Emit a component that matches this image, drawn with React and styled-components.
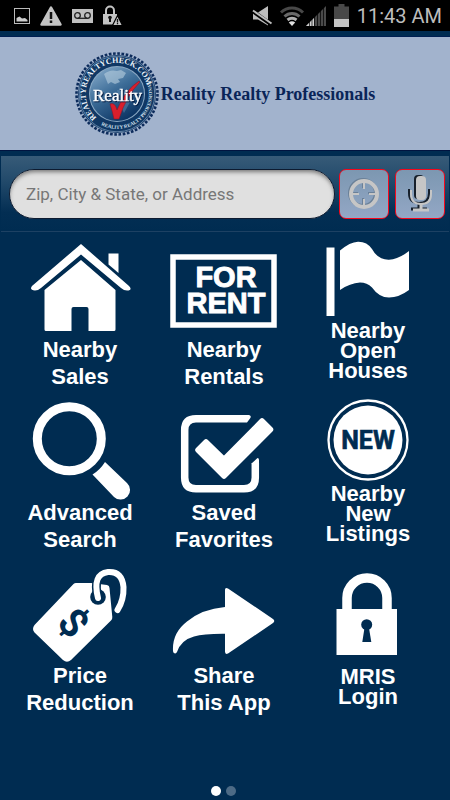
import styled, { createGlobalStyle } from "styled-components";

const NAVY = "#002c51";

const GlobalStyle = createGlobalStyle`
  * {
    box-sizing: border-box;
  }

  body {
    margin: 0;
    background: ${NAVY};
    font-family: "Liberation Sans", Arial, sans-serif;
  }

  svg {
    display: block;
    flex: none;
    overflow: visible;
  }
`;

const Screen = styled.div`
  display: flex;
  flex-direction: column;
  min-height: 100vh;
  background: ${NAVY};
`;

// Phone status bar
const StatusBar = styled.div`
  display: flex;
  justify-content: space-between;
  align-items: center;
  height: 31px;
  padding: 0 8px 0 14px;
  background: #000;
`;

const StatusGroup = styled.div`
  display: flex;
  align-items: center;
  gap: ${({ $gap }) => $gap}px;
`;

const Clock = styled.time`
  font-family: Roboto, sans-serif;
  font-size: 20px;
  line-height: 32px;
  color: #bdbdbd;
`;

// Brand header
const Header = styled.header`
  display: flex;
  justify-content: center;
  align-items: center;
  gap: 2px;
  height: 115px;
  margin-top: 5px;
  border-top: 1px solid #001f52;
  border-bottom: 1px solid #001440;
  background: #a2b3cd;
`;

const BrandName = styled.h1`
  margin: 0;
  font-family: "Liberation Serif", "Times New Roman", serif;
  font-size: 18px;
  line-height: 24px;
  font-weight: bold;
  color: #0a2558;
`;

const SealName = styled.text`
  font-size: 17px;
  fill: #fff;
  stroke: #fff;
  stroke-width: 0.4px;
  filter: drop-shadow(1px 1px 0 #071f45);
`;

// Search row
const SearchBar = styled.form`
  display: flex;
  align-items: center;
  gap: 4px;
  height: 76px;
  margin: 5px 1px 0;
  padding: 0 4px 0 8px;
  border-bottom: 1px solid #1d4163;
  background: linear-gradient(#375b78, #21496a 35%, #032e53 75%, ${NAVY});
`;

const SearchInput = styled.input`
  flex: 1;
  min-width: 0;
  height: 50px;
  padding: 0 16px;
  border: 1px solid #0d1b30;
  border-radius: 25px;
  background: #e0e0e0;
  box-shadow: inset 0 3px 4px -1px #777;
  font-family: Roboto, sans-serif;
  font-size: 17px;
  color: #333;
  outline: none;

  &::placeholder {
    color: #777;
    opacity: 1;
  }
`;

const SearchActions = styled.div`
  display: flex;
  gap: 6px;
`;

const SearchButton = styled.button`
  display: flex;
  justify-content: center;
  align-items: center;
  width: 50px;
  height: 50px;
  padding: 0;
  border: 1px solid #f5081c;
  border-radius: 7px;
  background: linear-gradient(#7c97b1, #93a7c5);
  cursor: pointer;
`;

// Menu
const Menu = styled.main`
  display: grid;
  grid-template-columns: repeat(3, 1fr);
  grid-auto-rows: 153px;
  gap: 10px 0;
  padding: 6px 10px 0 8px;
`;

const Tile = styled.button`
  display: flex;
  flex-direction: column;
  justify-content: space-between;
  align-items: center;
  padding: 0 0 ${({ $tight }) => ($tight ? 10 : 1)}px;
  border: 0;
  background: none;
  color: #fff;
  cursor: pointer;
`;

const TileLabel = styled.span`
  font-family: "Liberation Sans", Arial, sans-serif;
  font-size: 22px;
  font-weight: bold;
  line-height: ${({ $tight }) => ($tight ? 20 : 27)}px;
  text-align: center;
`;

const LabelLine = styled.span`
  display: block;
`;

const Pager = styled.nav`
  display: flex;
  justify-content: center;
  gap: 5px;
  margin-top: auto;
  padding: 0 3px 4px 0;
`;

const Dot = styled.button`
  width: 10px;
  height: 10px;
  padding: 0;
  border: 0;
  border-radius: 50%;
  background: ${({ $active }) => ($active ? "#fff" : "#4d6b86")};
`;

const PictureIcon = () => (
  <svg width="16" height="16" viewBox="0 0 16 16">
    <rect x="0.5" y="0.5" width="15" height="15" fill="none" stroke="#bbb" />
    <path d="M2.5 13.5V10l3-1.5 2.5 2 3-.5 2.5 2v1.5z" fill="#ccc" />
  </svg>
);

const WarningIcon = () => (
  <svg width="22" height="20" viewBox="0 0 22 20">
    <path d="M11 1.5 20.5 18.5h-19z" fill="#c4c4c4" stroke="#c4c4c4" strokeWidth="2.5" strokeLinejoin="round" />
    <path d="M11 6v7M11 14.5v2.5" stroke="#111" strokeWidth="2.5" />
  </svg>
);

const VoicemailIcon = () => (
  <svg width="21" height="14" viewBox="0 0 21 14">
    <rect width="21" height="14" fill="#c0c0c0" />
    <g fill="none" stroke="#222" strokeWidth="1.3">
      <circle cx="5.5" cy="6.5" r="2.8" />
      <circle cx="15.5" cy="6.5" r="2.8" />
      <path d="M5.5 9.3h10" />
    </g>
  </svg>
);

const LockAlertIcon = () => (
  <svg width="20" height="21" viewBox="0 0 20 21">
    <path d="M3 10V5.5a4 4 0 0 1 8 0V10" fill="none" stroke="#c4c4c4" strokeWidth="2" />
    <rect y="9" width="14" height="10.5" fill="#c4c4c4" />
    <circle cx="7" cy="12.5" r="1.8" fill="#111" />
    <path d="M6 13h2v4H6z" fill="#111" />
    <path d="M14.5 10.5 19.5 20.5h-10z" fill="#c4c4c4" stroke="#000" strokeWidth="1.2" />
    <path d="M14.5 14v3.5M14.5 18v1.3" stroke="#111" strokeWidth="1.3" />
  </svg>
);

const MuteIcon = () => (
  <svg width="20" height="20" viewBox="0 0 20 20">
    <path d="M1 6.5h5L16 0v19.5L6 13.5H1z" fill="#bdbdbd" />
    <path d="M0 4.5 18.5 18" stroke="#000" strokeWidth="4" />
    <path d="M1 4.5 19.5 17.5" stroke="#bdbdbd" strokeWidth="2" />
  </svg>
);

const WifiIcon = () => (
  <svg width="24" height="20" viewBox="0 0 24 20">
    <g fill="none" strokeWidth="3">
      <path d="M1 6.5a16 16 0 0 1 22 0" stroke="#484848" />
      <path d="M4.5 10.5a11 11 0 0 1 15 0" stroke="#6a6a6a" />
      <path d="M7.5 14a7 7 0 0 1 9 0" stroke="#b0b0b0" />
    </g>
    <path d="M12 20 8.8 16.5a5 5 0 0 1 6.4 0z" fill="#e0e0e0" />
  </svg>
);

const SignalIcon = () => (
  <svg width="20" height="20" viewBox="0 0 20 20">
    <path d="M0 20 20 0v20z" fill="#4a4a4a" />
    <path d="M0 20l8-8v8z" fill="#d0d0d0" />
    <path d="M3.5 0v20M6 0v20M8.5 0v20M11.5 0v20M14.5 0v20M17.5 0v20" stroke="#000" strokeWidth="0.7" />
  </svg>
);

const BatteryIcon = () => (
  <svg width="15" height="23" viewBox="0 0 15 23">
    <path d="M4.5 0h6v2.5H15V23H0V2.5h4.5z" fill="#484848" />
    <path d="M0 15h15v8H0z" fill="#c4c4c4" />
  </svg>
);

const SealLogo = () => (
  <svg width="84" height="84" viewBox="-42 -42 84 84" fontFamily="Liberation Serif, serif">
    <defs>
      <linearGradient id="globe" x1="0" y1="0" x2="0.6" y2="1">
        <stop offset="0" stopColor="#8fb2d0" />
        <stop offset="0.5" stopColor="#3d6d98" />
        <stop offset="1" stopColor="#0d3665" />
      </linearGradient>
      <path id="ringTop" d="M-20.5 23.7A31.3 31.3 0 1 1 31 -4" />
      <path id="ringBottom" d="M-16 31A35 35 0 0 0 33 -12" />
    </defs>
    <circle r="40.5" fill="none" stroke="#0d2c5c" strokeWidth="2.6" strokeDasharray="2.65 1.59" />
    <circle r="39" fill="#103865" />
    <circle r="37.8" fill="none" stroke="#7593b4" strokeWidth="0.8" />
    <circle r="28" fill="#8ba9c4" />
    <circle r="27" fill="url(#globe)" />
    <path d="M-13-20q6-5 13-3l4-1 5 3-3 5-5 1 2 3-5 2-4-2-3 2-2-5z" fill="#b7cee0" opacity=".6" />
    <path d="M0-4l10 1 6 5-4 8-5 9-4-8z" fill="#7499bb" opacity=".4" />
    <text fill="#eaf1f8" fontSize="8" fontWeight="bold">
      <textPath href="#ringTop">REALTYREALTYCHECK.COM</textPath>
    </text>
    <text fill="#d5e1ee" fontSize="5" fontWeight="bold">
      <textPath href="#ringBottom">REALITY REALTY PROFESSIONALS</textPath>
    </text>
    <path d="M-7 10Q-2 8 0 16Q8-4 22-13L23-12Q9 2 2 25H-3Q-5 16-7 10z" fill="#d91f2c" stroke="#8c1022" strokeWidth="0.5" />
    <SealName x="-24" y="7">Reality</SealName>
  </svg>
);

const TargetShape = () => (
  <>
    <circle cx="16" cy="16" r="13" strokeWidth="4" />
    <path d="M16 5v6M16 21v6M5 16h6M21 16h6" strokeWidth="2" />
  </>
);

const TargetIcon = () => (
  <svg width="32" height="32" viewBox="0 0 32 32" fill="none">
    <g stroke="#6a8098" transform="translate(-1 -1)">
      <TargetShape />
    </g>
    <g stroke="#c6c6c6">
      <TargetShape />
    </g>
  </svg>
);

const MicShape = ({ color }) => (
  <g stroke={color} fill="none" strokeWidth="2">
    <rect x="7" y="1" width="10" height="24" rx="4" fill={color} stroke="none" />
    <path d="M2 15v4q0 10 10 10t10-10v-4" />
    <path d="M12 29v6M4 35h16" strokeWidth="3" />
  </g>
);

const MicIcon = () => (
  <svg width="24" height="38" viewBox="0 0 24 38">
    <g transform="translate(-1 -1)">
      <MicShape color="#17202b" />
    </g>
    <g transform="translate(1 0)">
      <MicShape color="#c6c6c6" />
    </g>
  </svg>
);

const HomeIcon = () => (
  <svg width="144" height="98" viewBox="0 0 144 98" fill="#fff">
    <path d="M73 6 24 48Q21 52 27 52.5 30 52.5 33 50L73 16.5 113 50Q116 52.5 119 52.5 125 52 121 48z" />
    <path d="M100.5 15.5h10v19.5l-10-8.5z" />
    <path d="M73 22 36.5 52v39.5q0 1.5 1.5 1.5H63.5V71q0-2 2-2h13q2 0 2 2V93H106q1.5 0 1.5-1.5V52z" />
  </svg>
);

const ForRentIcon = () => (
  <svg width="144" height="98" viewBox="0 0 144 98" fill="#fff">
    <rect x="21" y="19" width="101" height="68" fill="none" stroke="#fff" strokeWidth="5.5" />
    <g fontFamily="Liberation Sans, sans-serif" fontSize="29" fontWeight="bold" textAnchor="middle" stroke="#fff" strokeWidth="0.9">
      <text x="74" y="49">FOR</text>
      <text x="74" y="75">RENT</text>
    </g>
  </svg>
);

const FlagIcon = () => (
  <svg width="144" height="82" viewBox="0 0 144 82" fill="#fff">
    <path d="M30.5 9.5h8V78h-8z" />
    <path d="M44 12.5Q54 4 62 3.7 71 3.5 76 11 82 22 93 21.7 103 21 113 13V52Q103 59.5 93 59.5 83 59.5 76 49.5 71 44.5 64 44.5 54 45 44 52z" />
  </svg>
);

const MagnifierIcon = () => (
  <svg width="144" height="98" viewBox="0 0 144 98" fill="#fff">
    <circle cx="61.3" cy="37.7" r="32" fill="none" stroke="#fff" strokeWidth="9" />
    <path d="M97 61 119 82A9.5 9.5 0 0 1 106 96L84.5 73.5Q92 69 97 61z" />
  </svg>
);

const CheckboxIcon = () => (
  <svg width="144" height="98" viewBox="0 0 144 98" fill="#fff">
    <path d="M95 17.8H44q-11.3 0-11.3 11.3V76.5q0 11.3 11.3 11.3H92q11.3 0 11.3-11.3V62" fill="none" stroke="#fff" strokeWidth="7.5" />
    <path d="M95 14h2q3 1 1 3.5l-3 4zM99.5 62.5l6-5.5q1.5 0 1.5 2v4z" />
    <path d="M54 41 46 49 72 75 118.5 28.5 110 20 72 58.5z" stroke="#fff" strokeWidth="5.5" strokeLinejoin="round" />
  </svg>
);

const NewBadgeIcon = () => (
  <svg width="144" height="82" viewBox="0 0 144 82">
    <circle cx="72" cy="39" r="39.5" fill="none" stroke="#fff" strokeWidth="2.3" />
    <circle cx="72" cy="39" r="34.5" fill="#fff" />
    <text
      x="72"
      y="48"
      fill={NAVY}
      stroke={NAVY}
      strokeWidth="0.6"
      textAnchor="middle"
      fontFamily="Roboto, sans-serif"
      fontSize="25"
      fontWeight="bold"
    >
      NEW
    </text>
  </svg>
);

const PriceTagIcon = () => (
  <svg width="144" height="98" viewBox="0 0 144 98" fill="#fff">
    <path d="M68 19H83L99 21Q101.5 21.5 101.5 24L104.3 53Q104.5 55 103 56.5L63 96Q59 99.5 55 96L26.5 68.5Q23.5 65 26.5 61L65.5 20Q66.5 19 68 19z" />
    <circle cx="90" cy="33" r="7.8" fill={NAVY} />
    <path d="M90 34Q84 10 100 8 114 7 115.5 23 116 36 109.5 46" fill="none" stroke={NAVY} strokeWidth="9" />
    <path d="M90 34Q84 10 100 8 114 7 115.5 23 116 36 109.5 46" fill="none" stroke="#fff" strokeWidth="6" strokeLinecap="round" />
    <text
      transform="translate(64 60) rotate(48)"
      y="12"
      fill={NAVY}
      textAnchor="middle"
      fontFamily="Roboto, sans-serif"
      fontSize="40"
      fontWeight="bold"
    >
      $
    </text>
  </svg>
);

const ShareIcon = () => (
  <svg width="144" height="98" viewBox="0 0 144 98" fill="#fff">
    <path d="M73 43V26Q73 23 76 24.5L121 55Q123.5 57 121 59L76 89.5Q73 91 73 87.5V69.7Q52 69.5 42 72.5 29 76 25 88 24 90 22.5 89.3 21 89 21 87 20 69 35 57.5 50 45 73 43z" />
  </svg>
);

const PadlockIcon = () => (
  <svg width="144" height="98" viewBox="0 0 144 98" fill="#fff">
    <path d="M51 46V34a20 20 0 0 1 40 0V46" fill="none" stroke="#fff" strokeWidth="9.5" />
    <path d="M40.5 45H101V91H40.5z" />
    <circle cx="70.7" cy="60.7" r="5.5" fill={NAVY} />
    <path d="M68.5 64h4.5L75.3 78h-9z" fill={NAVY} />
  </svg>
);

const menuItems = [
  { Icon: HomeIcon, lines: ["Nearby", "Sales"] },
  { Icon: ForRentIcon, lines: ["Nearby", "Rentals"] },
  { Icon: FlagIcon, lines: ["Nearby", "Open", "Houses"], tight: true },
  { Icon: MagnifierIcon, lines: ["Advanced", "Search"] },
  { Icon: CheckboxIcon, lines: ["Saved", "Favorites"] },
  { Icon: NewBadgeIcon, lines: ["Nearby", "New", "Listings"], tight: true },
  { Icon: PriceTagIcon, lines: ["Price", "Reduction"] },
  { Icon: ShareIcon, lines: ["Share", "This App"] },
  { Icon: PadlockIcon, lines: ["MRIS", "Login"], tight: true },
];

const App = () => {
  return (
    <>
      <GlobalStyle />
      <Screen>
        <StatusBar>
          <StatusGroup $gap={10}>
            <PictureIcon />
            <WarningIcon />
            <VoicemailIcon />
            <LockAlertIcon />
          </StatusGroup>
          <StatusGroup $gap={8}>
            <MuteIcon />
            <StatusGroup $gap={2}>
              <WifiIcon />
              <SignalIcon />
            </StatusGroup>
            <BatteryIcon />
            <Clock>11:43 AM</Clock>
          </StatusGroup>
        </StatusBar>

        <Header>
          <SealLogo />
          <BrandName>Reality Realty Professionals</BrandName>
        </Header>

        <SearchBar onSubmit={(e) => e.preventDefault()}>
          <SearchInput
            type="text"
            aria-label="Zip, City & State, or Address"
            placeholder="Zip, City & State, or Address"
          />
          <SearchActions>
            <SearchButton type="button" aria-label="Use my location">
              <TargetIcon />
            </SearchButton>
            <SearchButton type="button" aria-label="Voice search">
              <MicIcon />
            </SearchButton>
          </SearchActions>
        </SearchBar>

        <Menu>
          {menuItems.map(({ Icon, lines, tight }) => (
            <Tile key={lines.join(" ")} type="button" $tight={tight}>
              <Icon />
              <TileLabel $tight={tight}>
                {lines.map((line) => (
                  <LabelLine key={line}>{line}</LabelLine>
                ))}
              </TileLabel>
            </Tile>
          ))}
        </Menu>

        <Pager>
          <Dot type="button" aria-label="Page 1" $active />
          <Dot type="button" aria-label="Page 2" />
        </Pager>
      </Screen>
    </>
  );
};

export default App;
